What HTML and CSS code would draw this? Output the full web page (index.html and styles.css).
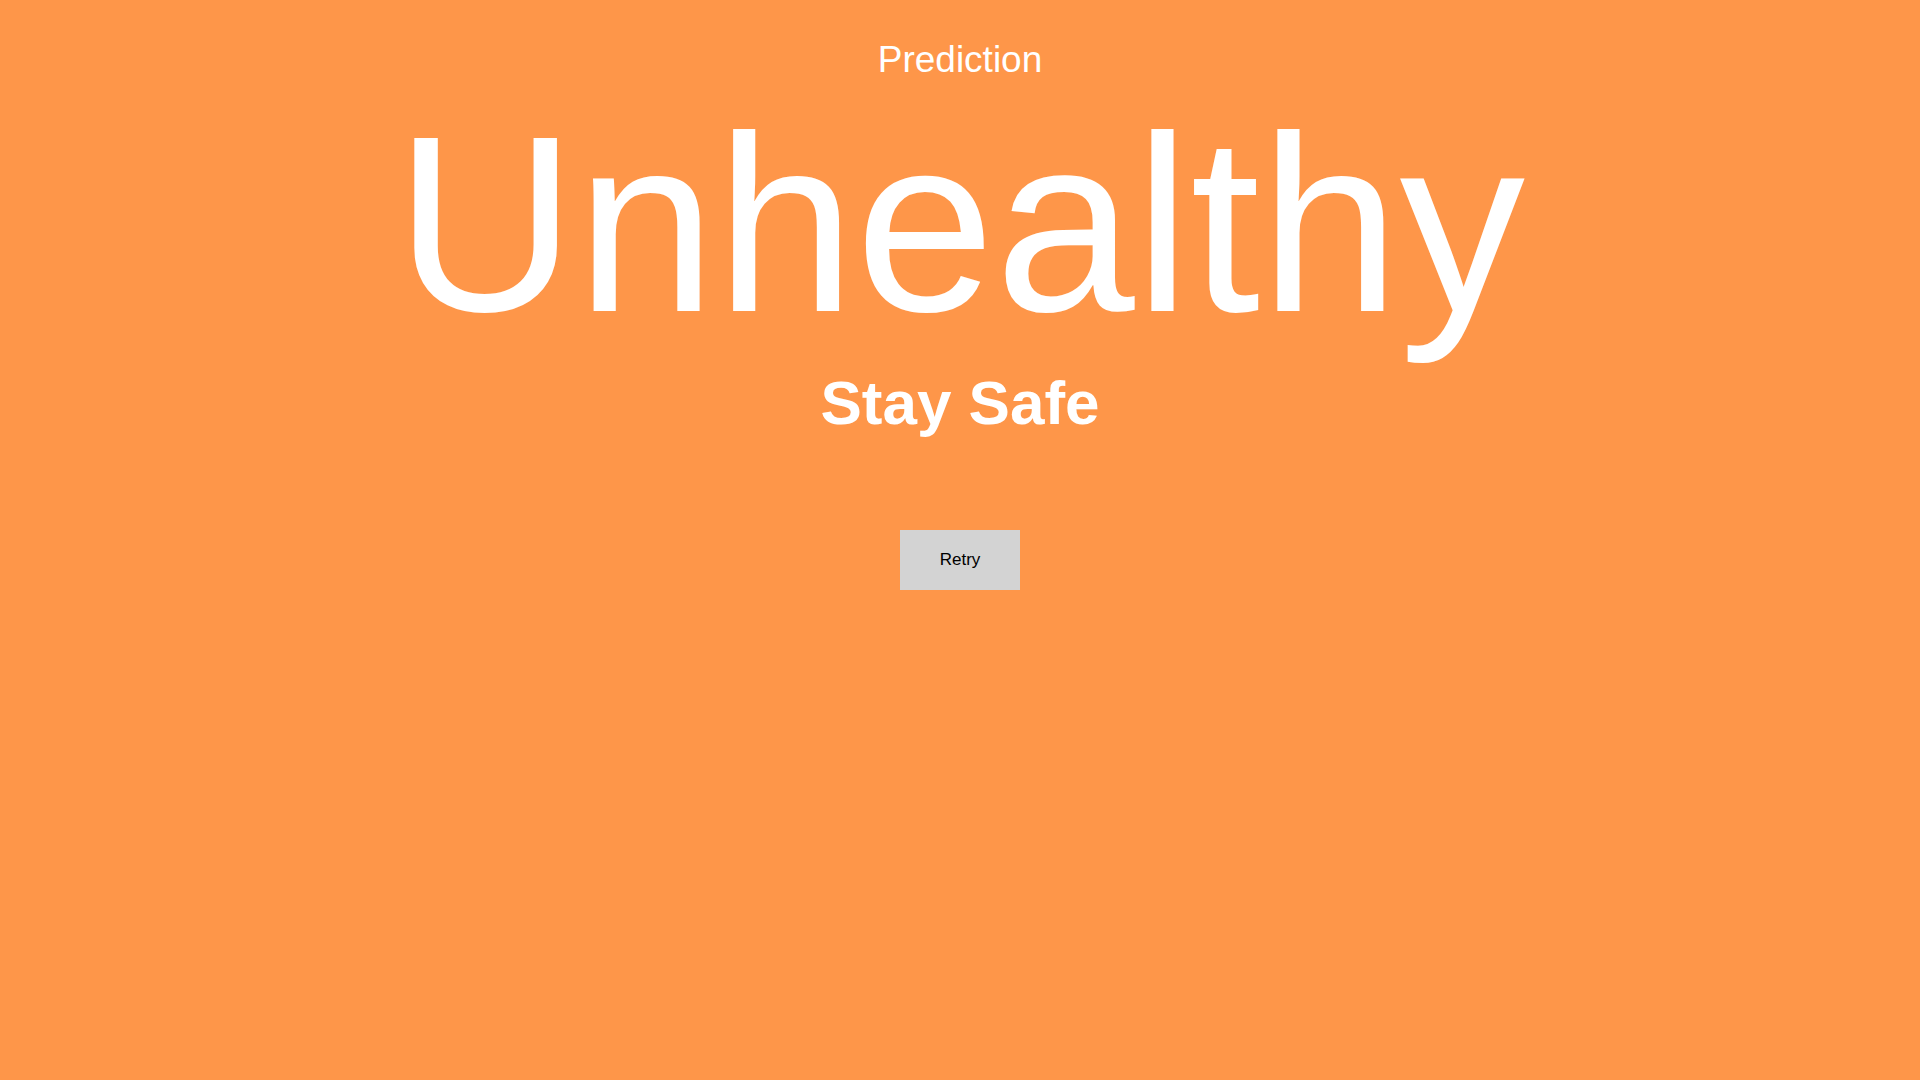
FILE: index.html
```html
<!DOCTYPE html>
<html>
<head>
<meta charset="utf-8">
<link rel="stylesheet" href="styles.css">
</head>
<body>
<main class="page">
  <h2 class="label">Prediction</h2>
  <h1 class="result">Unhealthy</h1>
  <h3 class="advice">Stay Safe</h3>
  <button class="retry">Retry</button>
</main>
</body>
</html>
```
FILE: styles.css
```css
html, body {
  margin: 0;
  padding: 0;
  height: 100%;
  background: #fe9649;
}
.page {
  display: flex;
  flex-direction: column;
  align-items: center;
  padding-top: 38px;
  font-family: "Liberation Sans", Arial, sans-serif;
  color: #ffffff;
}
.label {
  margin: 0;
  font-size: 37px;
  line-height: 43px;
  font-weight: normal;
}
.result {
  margin: 18px 0 0;
  font-size: 251px;
  line-height: 250px;
  font-weight: normal;
}
.advice {
  margin: 20px 0 0;
  font-size: 62px;
  line-height: 68px;
  font-weight: bold;
}
.retry {
  margin-top: 93px;
  width: 120px;
  height: 60px;
  border: none;
  background: #d3d3d3;
  color: #000000;
  font-family: "Liberation Sans", Arial, sans-serif;
  font-size: 17px;
  padding: 0;
}
```
